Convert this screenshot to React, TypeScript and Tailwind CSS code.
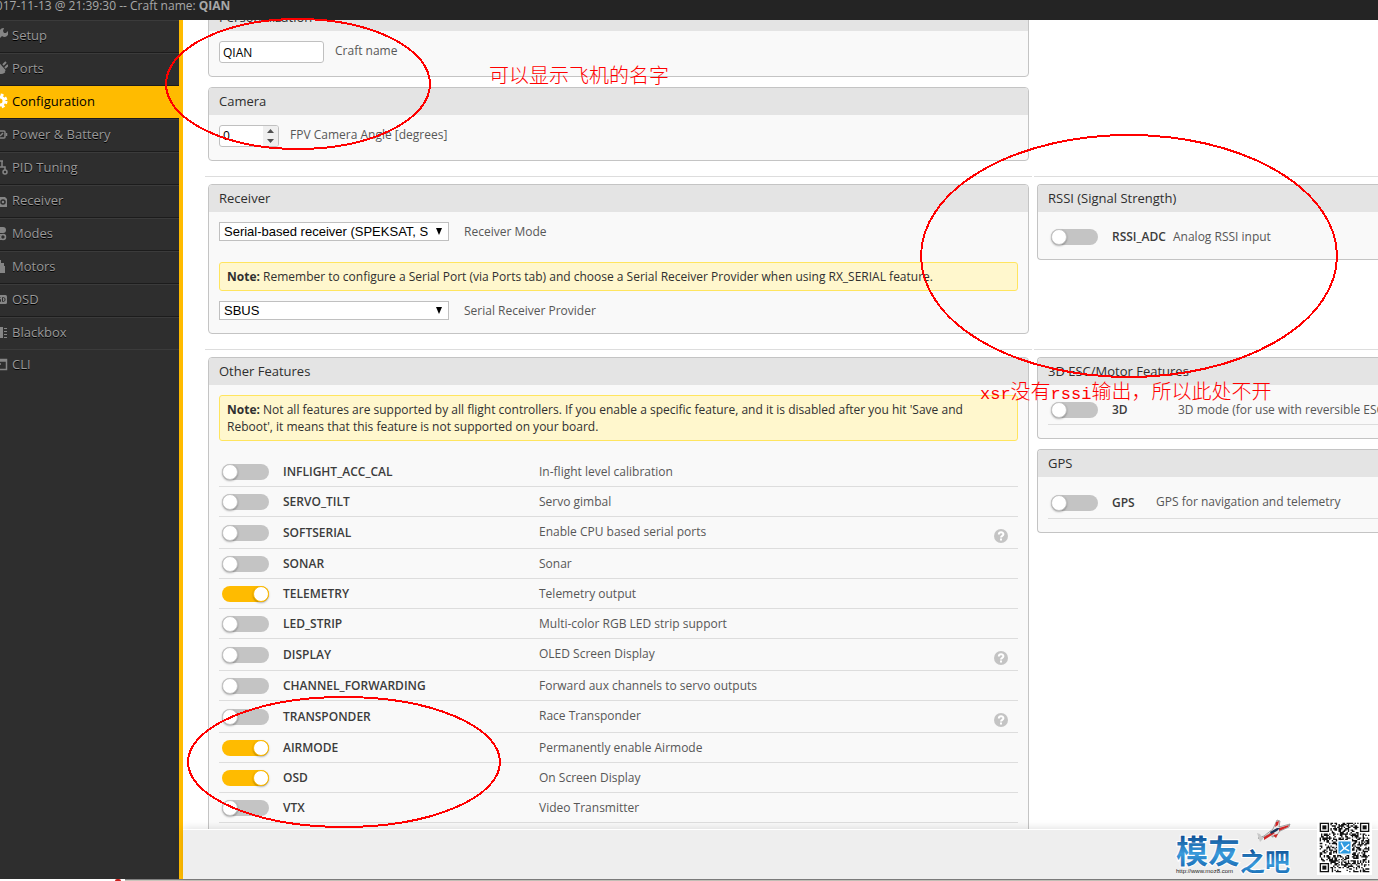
import { useId, useState, type ReactNode } from "react";
import clsx from "clsx";

type Feature = {
  name: string;
  description: string;
  enabled?: boolean;
  help?: boolean;
};

const FEATURES: Feature[] = [
  { name: "INFLIGHT_ACC_CAL", description: "In-flight level calibration" },
  { name: "SERVO_TILT", description: "Servo gimbal" },
  { name: "SOFTSERIAL", description: "Enable CPU based serial ports", help: true },
  { name: "SONAR", description: "Sonar" },
  { name: "TELEMETRY", description: "Telemetry output", enabled: true },
  { name: "LED_STRIP", description: "Multi-color RGB LED strip support" },
  { name: "DISPLAY", description: "OLED Screen Display", help: true },
  { name: "CHANNEL_FORWARDING", description: "Forward aux channels to servo outputs" },
  { name: "TRANSPONDER", description: "Race Transponder", help: true },
  { name: "AIRMODE", description: "Permanently enable Airmode", enabled: true },
  { name: "OSD", description: "On Screen Display", enabled: true },
  { name: "VTX", description: "Video Transmitter" },
];

const TABS: { label: string; icon: ReactNode }[] = [
  {
    label: "Setup",
    icon: <path d="M1 14 8 7a4 4 0 0 1 4-6l-1 3 1 2 2 0 2-2a4 4 0 0 1-6 5l-7 7z" fill="currentColor" />,
  },
  {
    label: "Ports",
    icon: (
      <g fill="none" stroke="currentColor" strokeWidth="2">
        <path d="M7 4l6 7M11 5l3-3M13 8l3-3M1 15l5-4" />
        <path d="M6 5a4 4 0 1 0 6 7z" fill="currentColor" />
      </g>
    ),
  },
  {
    label: "Configuration",
    icon: (
      <g fill="none" stroke="currentColor">
        <circle cx="8" cy="8" r="4" strokeWidth="3" />
        <circle cx="8" cy="8" r="6" strokeWidth="3" strokeDasharray="2.7 2" />
      </g>
    ),
  },
  {
    label: "Power & Battery",
    icon: (
      <g fill="none" stroke="currentColor" strokeWidth="1.5">
        <rect x="1" y="5" width="12" height="7" rx="1" />
        <path d="M14.500 7v3M8 10l3-3" />
      </g>
    ),
  },
  {
    label: "PID Tuning",
    icon: (
      <g fill="none" stroke="currentColor" strokeWidth="1.5">
        <path d="M10 2v6M4 11V8h9v3M8 2h3" />
        <circle cx="4" cy="13" r="2" />
        <circle cx="13" cy="13" r="2" />
      </g>
    ),
  },
  {
    label: "Receiver",
    icon: (
      <>
        <path d="M3 6V2h2v3h8l2 2v8H1V6z" fill="currentColor" />
        <circle cx="11" cy="10" r="2" fill="none" stroke="#2e2e2e" strokeWidth="1.5" />
      </>
    ),
  },
  {
    label: "Modes",
    icon: (
      <>
        <rect x="1" y="2" width="13" height="6" rx="3" fill="currentColor" />
        <rect x="1.500" y="9.500" width="12" height="5" rx="2.500" fill="none" stroke="currentColor" />
        <circle cx="11" cy="12" r="2.500" fill="none" stroke="currentColor" strokeWidth="1.500" />
      </>
    ),
  },
  {
    label: "Motors",
    icon: <path d="M7 2h2v3h3v3h1v7H3V8h3V5h1z" fill="currentColor" />,
  },
  {
    label: "OSD",
    icon: (
      <>
        <rect x="0" y="4" width="15" height="9" rx="1.500" fill="currentColor" />
        <path d="M8.500 6.500h-2v2h2v2h-2M10.500 6.500v4h1l1.500-1v-2l-1.500-1z" fill="none" stroke="#2e2e2e" />
      </>
    ),
  },
  {
    label: "Blackbox",
    icon: (
      <>
        <path d="M3 3h8v11H3z" fill="currentColor" />
        <path d="M12 4.500h3M12 7.500h3M12 10.500h3M12 13.500h3" stroke="currentColor" />
      </>
    ),
  },
  {
    label: "CLI",
    icon: <path d="M2 3.500h12.500v10H2zM2 5h12M5 8h4" fill="none" stroke="currentColor" strokeWidth="1.500" />,
  },
];

const QR_SIZE = 37;

function isFinder(x: number, y: number) {
  const edge = QR_SIZE - 8;
  return (x < 8 && y < 8) || (x >= edge && y < 8) || (x < 8 && y >= edge);
}

function buildQrPath() {
  let seed = 7919;
  let d = "";
  for (let y = 0; y < QR_SIZE; y += 1) {
    for (let x = 0; x < QR_SIZE; x += 1) {
      seed = (seed * 1103515245 + 12345) % 2147483648;
      if (isFinder(x, y)) continue;
      if (seed / 2147483648 > 0.5) d += `M${x} ${y}h1v1h-1z`;
    }
  }
  return d;
}

const QR_PATH = buildQrPath();

function Toggle({ id, defaultChecked }: { id: string; defaultChecked?: boolean }) {
  const [on, setOn] = useState(Boolean(defaultChecked));
  return (
    <input
      id={id}
      type="checkbox"
      checked={on}
      onChange={(e) => setOn(e.target.checked)}
      className="ml-[3px] block h-4 w-[47px] cursor-pointer appearance-none rounded-full bg-[#c4c4c4] before:block before:size-4 before:rounded-full before:border before:border-[#c4c4c4] before:bg-white before:shadow-[0_1px_2px_rgba(0,0,0,0.3)] checked:bg-[#ffbb00] checked:before:ml-auto checked:before:border-[#ffbb00]"
    />
  );
}

function HelpIcon() {
  return (
    <button type="button" aria-label="Help" className="mt-[6px] mr-[10px] block size-[14px]">
      <svg viewBox="0 0 14 14" className="size-[14px]">
        <circle cx="7" cy="7" r="7" fill="#c4c4c4" />
        <path d="M4.800 5.600c0-3.200 4.600-3 4.600-.3 0 1.600-2.400 1.500-2.400 3.300" fill="none" stroke="#fff" strokeWidth="2" />
        <rect x="6" y="9.500" width="2" height="2" fill="#fff" />
      </svg>
    </button>
  );
}

function FeatureTable({
  features,
  nameWidth,
  tall,
  lined = true,
}: {
  features: Feature[];
  nameWidth: string;
  tall?: boolean;
  lined?: boolean;
}) {
  const base = useId();
  return (
    <table className="w-full table-fixed border-separate border-spacing-0">
      <colgroup>
        <col className="w-16" />
        <col className={nameWidth} />
        <col />
        <col className="w-6" />
      </colgroup>
      <tbody>
        {features.map((f) => {
          const cell = clsx("p-0", f.help || tall ? "h-8" : "h-[30px]", lined && "border-b border-[#ddd]");
          const id = `${base}-${f.name}`;
          return (
            <tr key={f.name}>
              <td className={cell}>
                <Toggle id={id} defaultChecked={f.enabled} />
              </td>
              <td className={clsx(cell, "font-semibold whitespace-nowrap text-[#3c3c3c]")}>
                <label htmlFor={id}>{f.name}</label>
              </td>
              <td className={clsx(cell, "whitespace-nowrap", (f.help || tall) && "pb-[2px]")}>{f.description}</td>
              <td className={cell}>{f.help && <HelpIcon />}</td>
            </tr>
          );
        })}
      </tbody>
    </table>
  );
}

function Card({ title, children, cut, short }: { title: string; children: ReactNode; cut?: boolean; short?: boolean }) {
  return (
    <section
      className={clsx(
        "overflow-hidden border border-[#c4c4c4] bg-[#f9f9f9]",
        cut ? "ml-[3px] rounded-l border-r-0" : "mx-[3px] rounded",
      )}
    >
      <h2 className="h-[27px] bg-[#e4e4e4] px-[10px] text-[13px] leading-[27px] font-medium text-[#2e2e2e]">{title}</h2>
      <div className={clsx("pt-[10px] pl-[10px]", cut ? "pr-0" : "pr-[10px]", short ? "pb-[7px]" : "pb-[13px]")}>
        {children}
      </div>
    </section>
  );
}

function Note({ children, className }: { children: ReactNode; className?: string }) {
  return (
    <p
      className={clsx(
        "rounded-[3px] border border-[#ffe55f] bg-[#fff7cd] px-[7px] py-[5px] leading-[17px] text-[#303030]",
        className,
      )}
    >
      <strong>Note:</strong> {children}
    </p>
  );
}

function SelectField({ label, options }: { label: string; options: string[] }) {
  const id = useId();
  return (
    <div className="flex h-[19px] items-center gap-[15px]">
      <div className="relative">
        <select
          id={id}
          className="block h-[19px] w-[230px] appearance-none overflow-hidden border border-[#c0c0c0] bg-white pr-5 pl-1 font-['Liberation_Sans',sans-serif] text-[13px] leading-[17px] text-black"
        >
          {options.map((o) => (
            <option key={o}>{o}</option>
          ))}
        </select>
        <svg viewBox="0 0 8 7" className="pointer-events-none absolute top-[6px] right-[6px] h-[7px] w-2">
          <path d="M1 0h6L4 7z" />
        </svg>
      </div>
      <label htmlFor={id}>{label}</label>
    </div>
  );
}

function NumberField({ label }: { label: string }) {
  const id = useId();
  const [value, setValue] = useState(0);
  return (
    <div className="flex h-[22px] items-center gap-[11px]">
      <div className="flex h-[22px] w-[60px] overflow-hidden rounded-[3px] border border-[#c0c0c0] bg-white">
        <input
          id={id}
          inputMode="numeric"
          value={value}
          onChange={(e) => setValue(Number(e.target.value) || 0)}
          className="w-0 flex-1 px-[3px] text-black"
        />
        <div className="flex w-[15px] flex-col bg-[#efefef]">
          <button type="button" aria-label="Increase" onClick={() => setValue(value + 1)} className="flex flex-1 items-center justify-center">
            <svg viewBox="0 0 7 4" className="h-1 w-[7px]">
              <path d="M0 4h7L3.500 0z" fill="#505050" />
            </svg>
          </button>
          <button type="button" aria-label="Decrease" onClick={() => setValue(value - 1)} className="flex flex-1 items-center justify-center">
            <svg viewBox="0 0 7 4" className="h-1 w-[7px]">
              <path d="M0 0h7L3.500 4z" fill="#505050" />
            </svg>
          </button>
        </div>
      </div>
      <label htmlFor={id} className="pb-[2px]">
        {label}
      </label>
    </div>
  );
}

function Sidebar() {
  return (
    <nav className="w-[183px] shrink-0 overflow-hidden border-r-4 border-[#ffbb00] bg-[#2e2e2e]">
      <ul>
        {TABS.map((tab, i) => {
          const active = tab.label === "Configuration";
          const tail = i >= TABS.length - 2;
          return (
            <li key={tab.label}>
              <a
                href={`#${tab.label}`}
                className={clsx(
                  "flex items-center border-t pb-1 text-[13px]",
                  tail ? "h-8" : "h-[33px] border-b border-b-[#1c1c1c]",
                  active
                    ? "border-t-[#ffbb00] bg-[#ffbb00] text-black"
                    : "border-t-[#3b3b3b] text-[#999] [text-shadow:0_1px_#000]",
                )}
              >
                <svg viewBox="0 0 16 16" className={clsx("-ml-2 size-4 shrink-0", active ? "text-white" : "text-[#858585]")}>
                  {tab.icon}
                </svg>
                <span className="ml-1">{tab.label}</span>
              </a>
            </li>
          );
        })}
      </ul>
    </nav>
  );
}

function QrCode() {
  return (
    <svg viewBox="-2 -2 41 41" className="h-[55px] w-[55px]" role="img" aria-label="QR code">
      <rect x="-2" y="-2" width="41" height="41" fill="#fff" />
      <path d={QR_PATH} fill="#111" />
      {[
        [0, 0],
        [30, 0],
        [0, 30],
      ].map(([x, y]) => (
        <g key={`${x}-${y}`} fill="#111">
          <path d={`M${x} ${y}h7v7h-7zM${x + 1} ${y + 1}v5h5v-5z`} fillRule="evenodd" />
          <rect x={x + 2} y={y + 2} width="3" height="3" />
        </g>
      ))}
      <rect x="13.500" y="13.500" width="10" height="10" fill="#2d9be0" stroke="#fff" />
      <path d="M15 22l7-6M16 15l2 4 4 2" stroke="#fff" strokeWidth="1" fill="none" />
    </svg>
  );
}

function SiteLogo() {
  return (
    <svg viewBox="0 0 120 60" className="h-[60px] w-[120px]" role="img" aria-label="模友之吧">
      <defs>
        <linearGradient id="logo-blue" x1="0" y1="0" x2="0" y2="1">
          <stop offset="0.200" stopColor="#0d4f94" />
          <stop offset="0.600" stopColor="#3a9bdc" />
          <stop offset="1" stopColor="#0f5fa8" />
        </linearGradient>
      </defs>
      <g fontFamily="'Noto Sans CJK SC', sans-serif" fontWeight="700" fill="url(#logo-blue)">
        <text x="4" y="48" fontSize="32" stroke="#fff" strokeWidth="2" paintOrder="stroke">
          模友
        </text>
        <text x="68" y="56" fontSize="25" stroke="#fff" strokeWidth="2" paintOrder="stroke">
          之吧
        </text>
      </g>
      <text x="4" y="58" fontSize="6" fontFamily="'Liberation Sans', sans-serif" fill="#222">
        http://www.moz8.com
      </text>
      <path d="M86 23l6-2 9-7 4-9 3 1-1 6 11-3-1 3-9 4-4 5-4 1 0-5-11 7z" fill="#e9e9e9" stroke="#555" strokeWidth="0.500" />
      <path d="M104 7l3-1-1 4-3 2zM92 22l9-5 2 1-11 7zM107 13l10-3-1 2-9 4zM101 20l5-1-2 4z" fill="#cf2626" />
      <path d="M98 17l7-4 3 0-3 3-6 3z" fill="#1b3558" />
      <path d="M85 18l3 1 3 5-3 3z" fill="#c9c9c9" />
    </svg>
  );
}

// Hand-drawn circles and remarks that sit on top of the form.
function Annotations() {
  return (
    <div className="pointer-events-none absolute inset-0 overflow-hidden text-[20px] leading-6 text-[#f00]">
      <svg className="absolute inset-0 size-full" fill="none" stroke="#f00" strokeWidth="2" shapeRendering="crispEdges">
        <ellipse cx="298" cy="84" rx="132" ry="65" />
        <ellipse cx="1129" cy="256" rx="208" ry="121" />
        <ellipse cx="344" cy="762" rx="156" ry="65" />
      </svg>
      <p className="absolute top-[63px] left-[489px] font-['Noto_Sans_CJK_SC',sans-serif] font-light whitespace-nowrap">
        可以显示飞机的名字
      </p>
      <p className="absolute top-[379px] left-[980px] font-['Noto_Sans_CJK_SC',sans-serif] font-light whitespace-nowrap">
        <span className="font-['Liberation_Mono',monospace] text-[17px] font-normal">xsr</span>没有
        <span className="font-['Liberation_Mono',monospace] text-[17px] font-normal">rssi</span>输出，所以此处不开
      </p>
    </div>
  );
}

export default function App() {
  const craftId = useId();
  return (
    <div className="relative flex h-screen flex-col overflow-hidden bg-white font-['Open_Sans',sans-serif] text-[12px] leading-4 text-[#575757]">
      <header className="h-5 shrink-0 overflow-hidden bg-[#242424] whitespace-nowrap text-[#a8a8a8]">
        <p className="-ml-[11px] leading-3">
          2017-11-13 @ 21:39:30 -- Craft name: <strong>QIAN</strong>
        </p>
      </header>

      <div className="flex min-h-0 flex-1">
        <Sidebar />
        <main className="flex min-w-0 flex-1 flex-col">
          <div className="min-h-0 flex-1 overflow-hidden pl-[22px]">
            {/* scrolled part of the page starts above the viewport */}
            <div className="-mt-[17px] grid grid-cols-[827fr_344fr] gap-x-[2px]">
              <div className="flex min-w-0 flex-col gap-[10px] pb-[15px]">
                <Card title="Personalization">
                  <div className="flex h-[22px] items-center gap-[11px]">
                    <input
                      id={craftId}
                      type="text"
                      defaultValue="QIAN"
                      className="h-[22px] w-[105px] rounded-[3px] border border-[#c0c0c0] bg-white px-[3px] text-black"
                    />
                    <label htmlFor={craftId} className="pb-[2px]">
                      Craft name
                    </label>
                  </div>
                </Card>
                <Card title="Camera">
                  <NumberField label="FPV Camera Angle [degrees]" />
                </Card>
              </div>
              <div />

              <div className="min-w-0 border-t border-[#ddd] pt-[7px] pb-[15px]">
                <Card title="Receiver">
                  <SelectField
                    label="Receiver Mode"
                    options={["Serial-based receiver (SPEKSAT, SBUS, SUMD)", "PPM RX input"]}
                  />
                  <Note className="mt-[21px] mb-[10px]">
                    Remember to configure a Serial Port (via Ports tab) and choose a Serial Receiver Provider when using
                    RX_SERIAL feature.
                  </Note>
                  <SelectField label="Serial Receiver Provider" options={["SBUS", "SUMD", "IBUS"]} />
                </Card>
              </div>
              <div className="min-w-0 border-t border-[#ddd] pt-[7px]">
                <Card title="RSSI (Signal Strength)" cut short>
                  <FeatureTable
                    features={[{ name: "RSSI_ADC", description: "Analog RSSI input" }]}
                    nameWidth="w-[61px]"
                    lined={false}
                  />
                </Card>
              </div>

              <div className="min-w-0 border-t border-[#ddd] pt-[7px]">
                <Card title="Other Features">
                  <Note className="mb-4">
                    Not all features are supported by all flight controllers. If you enable a specific feature, and it is
                    disabled after you hit 'Save and Reboot', it means that this feature is not supported on your board.
                  </Note>
                  <FeatureTable features={FEATURES} nameWidth="w-[256px]" />
                </Card>
              </div>
              <div className="flex min-w-0 flex-col gap-[10px] border-t border-[#ddd] pt-[7px]">
                <Card title="3D ESC/Motor Features" cut>
                  <FeatureTable
                    features={[{ name: "3D", description: "3D mode (for use with reversible ESCs)" }]}
                    nameWidth="w-[66px]"
                  />
                </Card>
                <Card title="GPS" cut>
                  <FeatureTable
                    features={[{ name: "GPS", description: "GPS for navigation and telemetry" }]}
                    nameWidth="w-[44px]"
                    tall
                  />
                </Card>
              </div>
            </div>
          </div>

          <footer className="relative h-[50px] shrink-0 border-t border-white bg-[#eee] shadow-[0_-1px_8px_rgba(0,0,0,0.12)]">
            <div className="absolute right-[6px] bottom-1 flex items-end gap-[25px]">
              <SiteLogo />
              <QrCode />
            </div>
          </footer>
        </main>
      </div>

      <div className="flex h-[2px] shrink-0">
        <div className="w-[115px] bg-white" />
        <div className="w-[6px] rounded-t-full bg-[#c8201c]" />
        <div className="w-[4px] bg-white" />
        <div className="flex-1 border-t border-[#808080] bg-[#c9c5bb]" />
      </div>

      <Annotations />
    </div>
  );
}
